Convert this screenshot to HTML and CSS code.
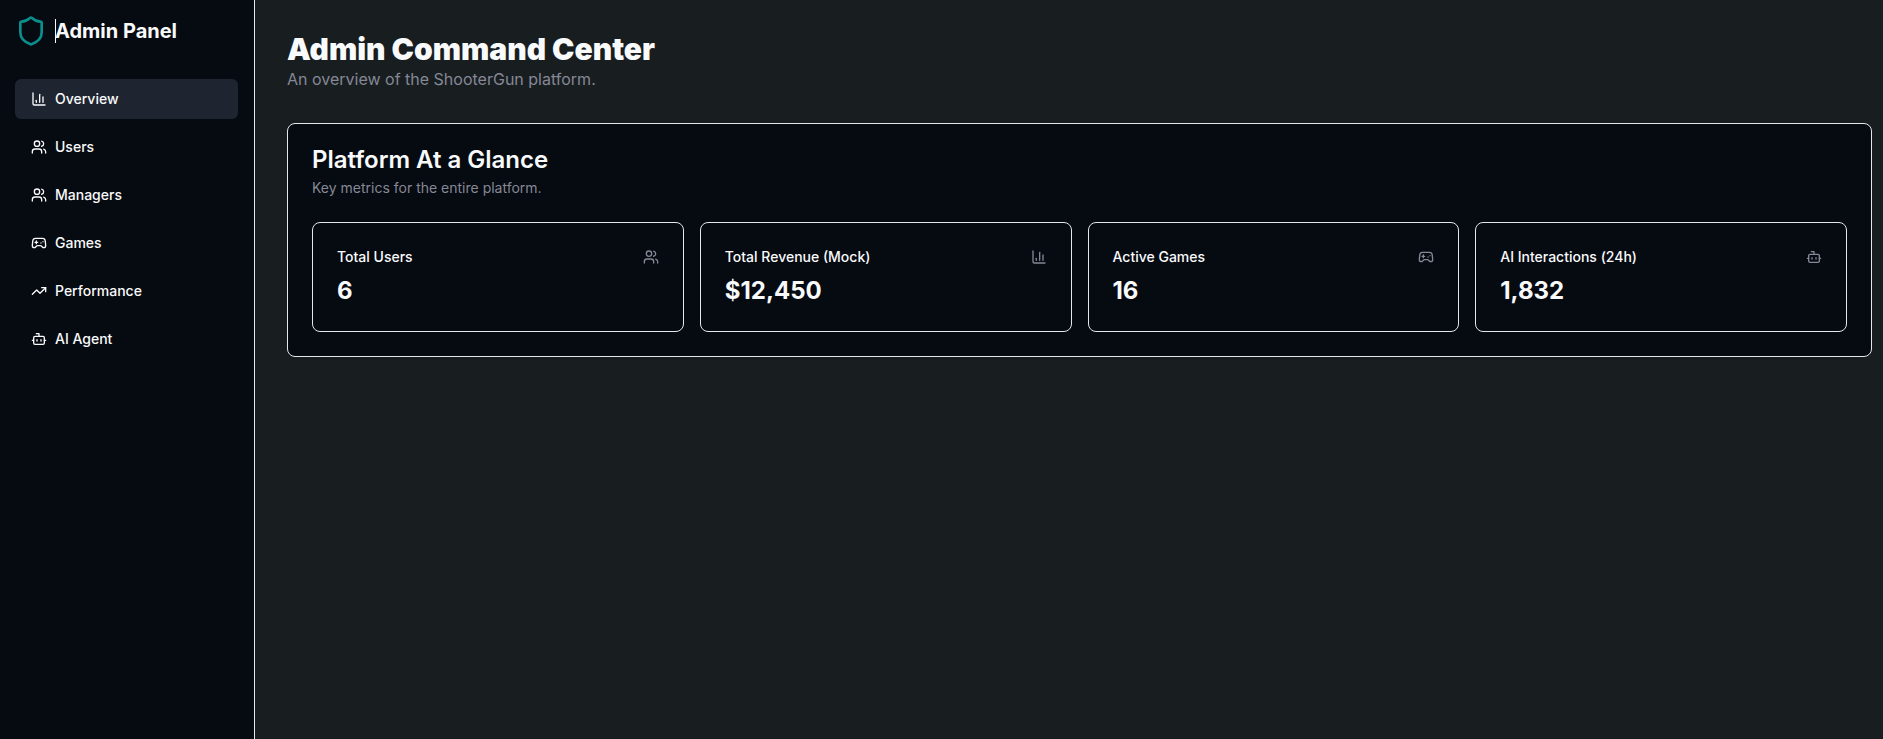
FILE: index.html
```html
<!DOCTYPE html>
<html lang="en">
<head>
<meta charset="utf-8">
<meta name="viewport" content="width=device-width, initial-scale=1">
<title>Admin Command Center</title>
<link rel="stylesheet" href="styles.css">
</head>
<body>
<svg class="sprite" aria-hidden="true">
  <symbol id="shield" viewBox="0 0 24 24"><path d="M20 13c0 5-3.5 7.5-7.66 8.95a1 1 0 0 1-.67-.01C7.5 20.5 4 18 4 13V6a1 1 0 0 1 1-1c2 0 4.5-1.2 6.24-2.72a1.17 1.17 0 0 1 1.52 0C14.51 3.81 17 5 19 5a1 1 0 0 1 1 1z"/></symbol>
  <symbol id="chart" viewBox="0 0 24 24"><path d="M3 3v16a2 2 0 0 0 2 2h16"/><path d="M18 17V9"/><path d="M13 17V5"/><path d="M8 17v-3"/></symbol>
  <symbol id="users" viewBox="0 0 24 24"><path d="M16 21v-2a4 4 0 0 0-4-4H6a4 4 0 0 0-4 4v2"/><circle cx="9" cy="7" r="4"/><path d="M22 21v-2a4 4 0 0 0-3-3.87"/><path d="M16 3.13a4 4 0 0 1 0 7.75"/></symbol>
  <symbol id="gamepad" viewBox="0 0 24 24"><path d="M6 11h4"/><path d="M8 9v4"/><path d="M15 12h.01"/><path d="M18 10h.01"/><path d="M17.32 5H6.68a4 4 0 0 0-3.978 3.59c-.006.052-.01.101-.017.152C2.604 9.416 2 14.456 2 16a3 3 0 0 0 3 3c1 0 1.5-.5 2-1l1.414-1.414A2 2 0 0 1 9.828 16h4.344a2 2 0 0 1 1.414.586L17 18c.5.5 1 1 2 1a3 3 0 0 0 3-3c0-1.545-.604-6.584-.685-7.258-.007-.05-.011-.1-.017-.151A4 4 0 0 0 17.32 5z"/></symbol>
  <symbol id="trend" viewBox="0 0 24 24"><path d="M22 7 13.5 15.5 8.5 10.5 2 17"/><path d="M16 7h6v6"/></symbol>
  <symbol id="bot" viewBox="0 0 24 24"><path d="M12 8V4H8"/><rect width="16" height="12" x="4" y="8" rx="2"/><path d="M2 14h2"/><path d="M20 14h2"/><path d="M15 13v2"/><path d="M9 13v2"/></symbol>
</svg>
<div class="layout">
  <aside class="sidebar">
    <div class="brand">
      <svg class="icon brand-icon" aria-hidden="true"><use href="#shield"/></svg>
      <span class="brand-name">Admin Panel</span>
    </div>
    <nav class="nav" aria-label="Admin">
      <a class="nav-link active" href="#" aria-current="page"><svg class="icon" aria-hidden="true"><use href="#chart"/></svg>Overview</a>
      <a class="nav-link" href="#"><svg class="icon" aria-hidden="true"><use href="#users"/></svg>Users</a>
      <a class="nav-link" href="#"><svg class="icon" aria-hidden="true"><use href="#users"/></svg>Managers</a>
      <a class="nav-link" href="#"><svg class="icon" aria-hidden="true"><use href="#gamepad"/></svg>Games</a>
      <a class="nav-link" href="#"><svg class="icon" aria-hidden="true"><use href="#trend"/></svg>Performance</a>
      <a class="nav-link" href="#"><svg class="icon" aria-hidden="true"><use href="#bot"/></svg>AI Agent</a>
    </nav>
  </aside>
  <main class="main">
    <header class="page-header">
      <h1 class="page-title">Admin Command Center</h1>
      <p class="page-subtitle">An overview of the ShooterGun platform.</p>
    </header>
    <section class="panel">
      <header class="panel-header">
        <h2 class="panel-title">Platform At a Glance</h2>
        <p class="panel-subtitle">Key metrics for the entire platform.</p>
      </header>
      <div class="stats">
        <article class="stat">
          <div class="stat-header"><h3 class="stat-title">Total Users</h3><svg class="icon" aria-hidden="true"><use href="#users"/></svg></div>
          <p class="stat-value">6</p>
        </article>
        <article class="stat">
          <div class="stat-header"><h3 class="stat-title">Total Revenue (Mock)</h3><svg class="icon" aria-hidden="true"><use href="#chart"/></svg></div>
          <p class="stat-value">$12,450</p>
        </article>
        <article class="stat">
          <div class="stat-header"><h3 class="stat-title">Active Games</h3><svg class="icon" aria-hidden="true"><use href="#gamepad"/></svg></div>
          <p class="stat-value">16</p>
        </article>
        <article class="stat">
          <div class="stat-header"><h3 class="stat-title">AI Interactions (24h)</h3><svg class="icon" aria-hidden="true"><use href="#bot"/></svg></div>
          <p class="stat-value">1,832</p>
        </article>
      </div>
    </section>
  </main>
</div>
</body>
</html>
```

FILE: styles.css
```css
:root {
  --background: #181d20;
  --surface: #060a11;
  --accent: #1e2530;
  --border: #e5e7eb;
  --text: #f9fafb;
  --muted: #858896;
  --teal: #0a8f8c;
}

* { box-sizing: border-box; }

body {
  margin: 0;
  background: var(--background);
  color: var(--text);
  font-family: Inter, "Liberation Sans", sans-serif;
  font-size: 14px;
  line-height: 20px;
}

h1, h2, h3, p { margin: 0; }

.sprite { display: none; }

.icon {
  width: 16px;
  height: 16px;
  flex: none;
  fill: none;
  stroke: currentColor;
  stroke-width: 2;
  stroke-linecap: round;
  stroke-linejoin: round;
}

.layout {
  display: flex;
  min-height: 100vh;
}

.sidebar {
  display: flex;
  flex-direction: column;
  gap: 32px;
  flex: none;
  width: 255px;
  padding: 15px 16px 15px 15px;
  background: var(--surface);
  border-right: 1px solid var(--border);
}

.brand {
  display: flex;
  align-items: center;
  gap: 8px;
}

.brand-icon {
  width: 32px;
  height: 32px;
  color: var(--teal);
}

.brand-name {
  position: relative;
  font-size: 20px;
  font-weight: 700;
  line-height: 24px;
}

/* Thin caret drawn over the start of the name */
.brand-name::before {
  content: "";
  position: absolute;
  top: 0;
  bottom: 0;
  left: 0;
  width: 1px;
  background: var(--text);
}

.nav {
  display: flex;
  flex-direction: column;
  gap: 8px;
}

.nav-link {
  display: flex;
  align-items: center;
  gap: 8px;
  height: 40px;
  padding: 0 16px;
  border-radius: 6px;
  color: inherit;
  font-weight: 500;
  text-decoration: none;
}

.nav-link.active,
.nav-link:hover { background: var(--accent); }

.main {
  display: flex;
  flex-direction: column;
  flex: 1;
  gap: 32px;
  min-width: 0;
  padding: 31px 11px 32px 32px;
}

.page-title {
  font-size: 30px;
  font-weight: 900;
  line-height: 36px;
}

.page-subtitle {
  color: var(--muted);
  font-size: 16px;
  line-height: 24px;
}

.panel,
.stat {
  padding: 24px;
  background: var(--surface);
  border: 1px solid var(--border);
  border-radius: 8px;
}

.panel-header {
  display: grid;
  gap: 6px;
  margin-bottom: 24px;
}

.panel-title {
  font-size: 24px;
  font-weight: 600;
  line-height: 24px;
}

.panel-subtitle { color: var(--muted); }

.stats {
  display: grid;
  grid-template-columns: repeat(4, 1fr);
  gap: 16px;
}

.stat-header {
  display: flex;
  align-items: center;
  justify-content: space-between;
  margin-bottom: 8px;
}

.stat-header .icon { color: var(--muted); }

.stat-title {
  font-size: 14px;
  font-weight: 500;
}

.stat-value {
  font-size: 24px;
  font-weight: 700;
  line-height: 32px;
}
```
